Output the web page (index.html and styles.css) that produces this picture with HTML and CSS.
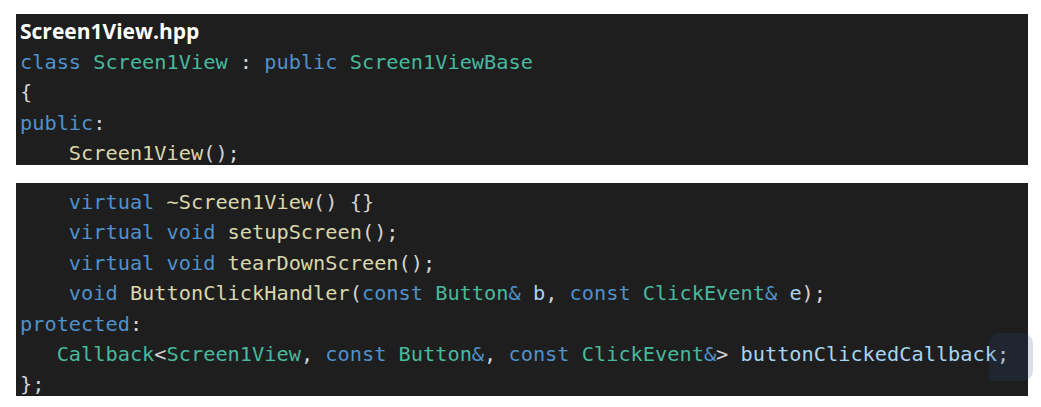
FILE: index.html
```html
<!DOCTYPE html>
<html>
<head>
<meta charset="utf-8">
<link rel="stylesheet" href="styles.css">
</head>
<body>
<div class="page">
  <div class="panel panel-top">
    <div class="title">Screen1View.hpp</div>
    <pre class="code"><span class="kw">class</span> <span class="ty">Screen1View</span> : <span class="kw">public</span> <span class="ty">Screen1ViewBase</span>
{
<span class="kw">public</span>:
    <span class="fn">Screen1View</span>();</pre>
  </div>
  <div class="panel panel-bottom">
    <pre class="code">    <span class="kw">virtual</span> <span class="fn">~Screen1View</span>() {}
    <span class="kw">virtual</span> <span class="kw">void</span> <span class="fn">setupScreen</span>();
    <span class="kw">virtual</span> <span class="kw">void</span> <span class="fn">tearDownScreen</span>();
    <span class="kw">void</span> <span class="fn">ButtonClickHandler</span>(<span class="kw">const</span> <span class="ty">Button</span><span class="kw">&amp;</span> <span class="var">b</span>, <span class="kw">const</span> <span class="ty">ClickEvent</span><span class="kw">&amp;</span> <span class="var">e</span>);
<span class="kw">protected</span>:
   <span class="ty">Callback</span>&lt;<span class="ty">Screen1View</span>, <span class="kw">const</span> <span class="ty">Button</span><span class="kw">&amp;</span>, <span class="kw">const</span> <span class="ty">ClickEvent</span><span class="kw">&amp;</span>&gt; <span class="var">buttonClickedCallback</span>;
};</pre>
  </div>
  <div class="watermark"></div>
</div>
</body>
</html>
```
FILE: styles.css
```css
html, body {
  margin: 0;
  padding: 0;
  background: #ffffff;
}

.page {
  position: relative;
  width: 1041px;
  height: 407px;
  padding: 14px 0 0 16px;
  box-sizing: border-box;
  display: flex;
  flex-direction: column;
  gap: 18px;
}

.panel {
  width: 1012px;
  background: #1e1e1e;
  overflow: hidden;
  box-sizing: border-box;
  padding-left: 4px;
}

.panel-top {
  height: 151px;
}

.panel-bottom {
  height: 213px;
  padding-top: 4px;
}

.title {
  font-family: "Open Sans", "Noto Sans", sans-serif;
  font-weight: 700;
  font-size: 21px;
  line-height: 34px;
  height: 33px;
  color: #ffffff;
}

.code {
  margin: 0;
  font-family: "DejaVu Sans Mono", monospace;
  font-size: 20.3px;
  line-height: 30.4px;
  color: #d4d4d4;
  white-space: pre;
}

.kw { color: #4f91cb; }
.ty { color: #48b99d; }
.fn { color: #d9d7ab; }
.var { color: #a8d4f0; }

.watermark {
  position: absolute;
  right: 8px;
  bottom: 26px;
  width: 44px;
  height: 48px;
  border-radius: 10px 10px 10px 2px;
  background: rgba(40, 80, 130, 0.18);
}
```
